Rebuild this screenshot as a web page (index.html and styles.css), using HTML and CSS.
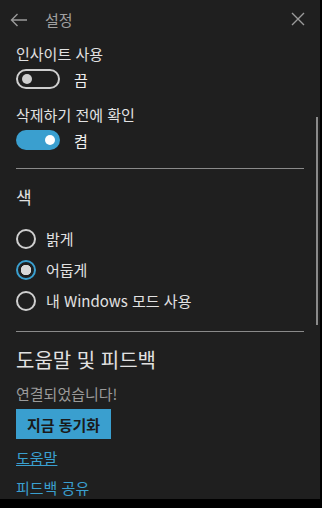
FILE: index.html
```html
<!DOCTYPE html>
<html lang="ko">
<head>
    <meta charset="UTF-8">
    <meta name="viewport" content="width=device-width, initial-scale=1.0">
    <title>설정</title>
    <link rel="stylesheet" href="styles.css">
</head>
<body>
    <div class="panel">
        <!-- Header -->
        <div class="header">
            <svg class="icon back" width="18" height="14" viewBox="0 0 18 14">
                <path d="M17 7H1.5M7.5 1L1.5 7l6 6" fill="none" stroke="#9a9a9a" stroke-width="1.4"/>
            </svg>
            <span class="title">설정</span>
            <svg class="icon close" width="14" height="14" viewBox="0 0 14 14">
                <path d="M1 1l12 12M13 1L1 13" fill="none" stroke="#9a9a9a" stroke-width="1.4"/>
            </svg>
        </div>

        <div class="content">
            <!-- Toggles -->
            <div class="setting">
                <div class="label">인사이트 사용</div>
                <div class="toggle-row">
                    <span class="toggle off"><span class="knob"></span></span>
                    <span class="state">끔</span>
                </div>
            </div>
            <div class="setting">
                <div class="label">삭제하기 전에 확인</div>
                <div class="toggle-row">
                    <span class="toggle on"><span class="knob"></span></span>
                    <span class="state">켬</span>
                </div>
            </div>

            <hr class="divider first">

            <!-- Theme -->
            <h3 class="section">색</h3>
            <div class="radio-list">
                <div class="radio"><span class="circle"></span>밝게</div>
                <div class="radio checked"><span class="circle"></span>어둡게</div>
                <div class="radio"><span class="circle"></span>내 Windows 모드 사용</div>
            </div>

            <hr class="divider">

            <!-- Help -->
            <h3 class="section big">도움말 및 피드백</h3>
            <div class="status">연결되었습니다!</div>
            <button class="sync">지금 동기화</button>
            <div class="links">
                <a href="#" class="underlined">도움말</a>
                <a href="#">피드백 공유</a>
            </div>
        </div>

        <div class="scrollbar"></div>
    </div>
</body>
</html>
```

FILE: styles.css
```css
/* Page */
body {
    margin: 0;
    background: #000;
    font-family: 'Noto Sans CJK KR', 'Noto Sans', sans-serif;
    color: #e2e2e2;
}

.panel {
    position: relative;
    width: 320px;
    height: 499px;
    overflow: hidden;
    background: #1f1f1f;
}

/* Header */
.header {
    display: flex;
    align-items: center;
    height: 38px;
    padding: 0 15px 0 10px;
}

.back {
    margin-top: 1px;
}

.title {
    margin-left: 17px;
    font-size: 15px;
    color: #a0a0a0;
    flex: 1;
}

/* Content */
.content {
    padding: 0 16px;
}

.setting {
    margin-bottom: 11px;
}

.setting + .setting {
    margin-bottom: 6px;
}

.label {
    font-size: 15px;
    line-height: 22px;
    margin-top: 5px;
}

.toggle-row {
    display: flex;
    align-items: center;
    gap: 14px;
    height: 28px;
}

.toggle {
    box-sizing: border-box;
    width: 44px;
    height: 20px;
    border-radius: 10px;
    display: flex;
    align-items: center;
    padding: 0 4px;
}

.toggle.off {
    border: 2px solid #cfcfcf;
}

.toggle.on {
    background: #3a9fcf;
    justify-content: flex-end;
    padding: 0 5px;
}

.knob {
    width: 10px;
    height: 10px;
    border-radius: 50%;
    background: #cfcfcf;
}

.toggle.on .knob {
    background: #fff;
}

.state {
    font-size: 15px;
    color: #f0f0f0;
}

.divider {
    border: none;
    border-top: 1px solid #8a8a8a;
    margin: 14px 0 0;
}

.section {
    font-weight: normal;
    font-size: 17px;
    margin: 16px 0 0;
    line-height: 24px;
}

.section.big {
    font-size: 20px;
    line-height: 28px;
    margin-top: 14px;
}

/* Radios */
.radio-list {
    margin-top: 14px;
}

.radio {
    display: flex;
    align-items: center;
    gap: 10px;
    height: 31px;
    font-size: 15px;
}

.circle {
    box-sizing: border-box;
    width: 20px;
    height: 20px;
    border-radius: 50%;
    border: 2px solid #cfcfcf;
}

.radio.checked .circle {
    border: 2px solid #3a9fcf;
    background: radial-gradient(circle, #d8d8d8 0 5px, #1f1f1f 5.5px);
}

.radio-list + .divider {
    margin-top: 15px;
}

/* Help section */
.status {
    margin-top: 9px;
    font-size: 15px;
    color: #9a9a9a;
}

.sync {
    margin-top: 5px;
    background: #3a9fcf;
    border: none;
    width: 95px;
    height: 30px;
    font-family: inherit;
    font-size: 15px;
    font-weight: bold;
    color: #1a1a1a;
    padding: 0;
}

.links {
    display: flex;
    flex-direction: column;
    align-items: flex-start;
    gap: 8px;
    margin-top: 8px;
}

.links a {
    color: #3a9fcf;
    font-size: 15px;
    line-height: 22px;
    text-decoration: none;
}

.links a.underlined {
    text-decoration: underline;
}

/* Scrollbar */
.scrollbar {
    position: absolute;
    right: 2px;
    top: 117px;
    width: 2px;
    height: 208px;
    background: #8a8a8a;
}
```
